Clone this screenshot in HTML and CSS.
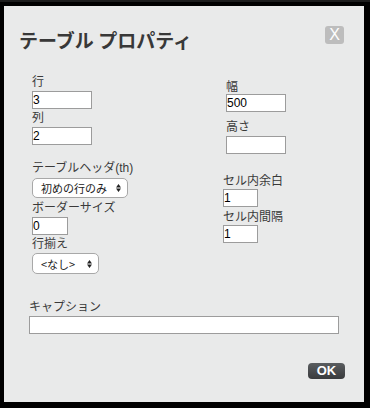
FILE: index.html
```html
<!DOCTYPE html>
<html lang="ja">
<head>
<meta charset="utf-8">
<title>テーブル プロパティ</title>
<link rel="stylesheet" href="styles.css">
</head>
<body>
<div class="dialog">
  <div class="head">
    <h1 class="title">テーブル プロパティ</h1>
    <button class="close" type="button">X</button>
  </div>

  <div class="section sec1">
    <div class="col left">
      <label class="lbl">行</label>
      <input class="in w60 mt2" type="text" value="3">
      <label class="lbl mt2">列</label>
      <input class="in w60 mt2" type="text" value="2">
    </div>
    <div class="col right r1">
      <label class="lbl">幅</label>
      <input class="in w60" type="text" value="500">
      <label class="lbl mt8">高さ</label>
      <input class="in w60 mt2" type="text" value="">
    </div>
  </div>

  <div class="section sec2">
    <div class="col left2">
      <label class="lbl">テーブルヘッダ(th)</label>
      <div class="sel w96 mt3">
        <select class="select"><option>初めの行のみ</option></select>
        <svg class="arrows" width="5" height="8" viewBox="0 0 5 8"><path d="M0 3.4L2.5 0L5 3.4Z M0 4.6L2.5 8L5 4.6Z" fill="#222"/></svg>
      </div>
      <label class="lbl mt3">ボーダーサイズ</label>
      <input class="in w36 mt2" type="text" value="0">
      <label class="lbl mt2">行揃え</label>
      <div class="sel w67 tall mt2">
        <select class="select"><option>&lt;なし&gt;</option></select>
        <svg class="arrows" width="5" height="8" viewBox="0 0 5 8"><path d="M0 3.4L2.5 0L5 3.4Z M0 4.6L2.5 8L5 4.6Z" fill="#222"/></svg>
      </div>
    </div>
    <div class="col right r2">
      <label class="lbl">セル内余白</label>
      <input class="in w35 mt1" type="text" value="1">
      <label class="lbl mt3">セル内間隔</label>
      <input class="in w35 mt1" type="text" value="1">
    </div>
  </div>

  <div class="caption">
    <label class="lbl">キャプション</label>
    <input class="in wcap mt2" type="text" value="">
  </div>

  <div class="foot">
    <button class="ok" type="button">OK</button>
  </div>
</div>
</body>
</html>
```

FILE: styles.css
```css
* { box-sizing: border-box; }

html, body {
  margin: 0;
  padding: 0;
  background: #000;
}

body {
  width: 370px;
  height: 408px;
  overflow: hidden;
  border-top: 2px solid #1c1c1c;
}

.dialog {
  margin: 4px 6px 6px 4px;
  width: 360px;
  height: 396px;
  background: #e9eaea;
  padding-top: 20px;
  font-family: "Liberation Sans", "Noto Sans CJK JP", sans-serif;
  color: #3a3a3a;
}

.head {
  display: flex;
  justify-content: space-between;
  align-items: flex-start;
  padding: 0 20px 0 15px;
}

.title {
  margin: 2px 0 0;
  font-family: "Noto Sans CJK JP", sans-serif;
  font-size: 19px;
  line-height: 24px;
  font-weight: 700;
  color: #383838;
}

.close {
  width: 19px;
  height: 18px;
  margin: 0;
  padding: 0;
  border: 0;
  border-radius: 3px;
  background: #bdbdbd;
  color: #fff;
  font-family: "Liberation Sans", sans-serif;
  font-size: 16px;
  line-height: 18px;
  text-align: center;
}

.section {
  display: flex;
  align-items: flex-start;
  padding-left: 28px;
}

.sec1 { margin-top: 23px; }
.sec2 { margin-top: 7px; }

.col {
  display: flex;
  flex-direction: column;
  align-items: flex-start;
}

.left { width: 194px; }
.left2 { width: 191px; }
.r1 { margin-top: 5px; }
.r2 { margin-top: 13px; }

.lbl {
  display: block;
  font-family: "Liberation Sans", "Noto Sans CJK JP", sans-serif;
  font-size: 12px;
  line-height: 14px;
  height: 14px;
  color: #3a3a3a;
  white-space: nowrap;
}

.in {
  display: block;
  height: 18px;
  margin: 0;
  padding: 0;
  border: 1px solid #9c9c9c;
  border-radius: 0;
  background: #fff;
  font-family: "Liberation Sans", sans-serif;
  font-size: 12px;
  color: #000;
  outline: none;
}

.w60 { width: 60px; }
.w36 { width: 36px; }
.w35 { width: 35px; }
.wcap { width: 310px; }

.mt1 { margin-top: 1px; }
.mt2 { margin-top: 2px; }
.mt3 { margin-top: 3px; }
.mt8 { margin-top: 8px; }

.sel {
  position: relative;
  height: 20px;
}
.sel.tall { height: 21px; }
.w96 { width: 96px; }
.w67 { width: 67px; }

.select {
  -webkit-appearance: none;
  appearance: none;
  display: block;
  width: 100%;
  height: 100%;
  margin: 0;
  padding: 0 0 0 8px;
  border: 1px solid #a8a8a8;
  border-radius: 5px;
  background: #fff;
  font-family: "Noto Sans CJK JP", sans-serif;
  font-size: 11px;
  line-height: 18px;
  color: #222;
  outline: none;
}

.arrows {
  position: absolute;
  right: 7px;
  top: 50%;
  margin-top: -4px;
  pointer-events: none;
}

.caption {
  margin-top: 26px;
  padding-left: 25px;
}

.foot {
  display: flex;
  justify-content: flex-end;
  padding-right: 19px;
  margin-top: 29px;
}

.ok {
  width: 37px;
  height: 16px;
  margin: 0;
  padding: 0;
  border: 0;
  border-radius: 4px;
  background: linear-gradient(#5a5d60, #393b3d);
  color: #fff;
  font-family: "Liberation Sans", sans-serif;
  font-size: 13px;
  font-weight: 700;
  line-height: 16px;
  text-align: center;
}
```
